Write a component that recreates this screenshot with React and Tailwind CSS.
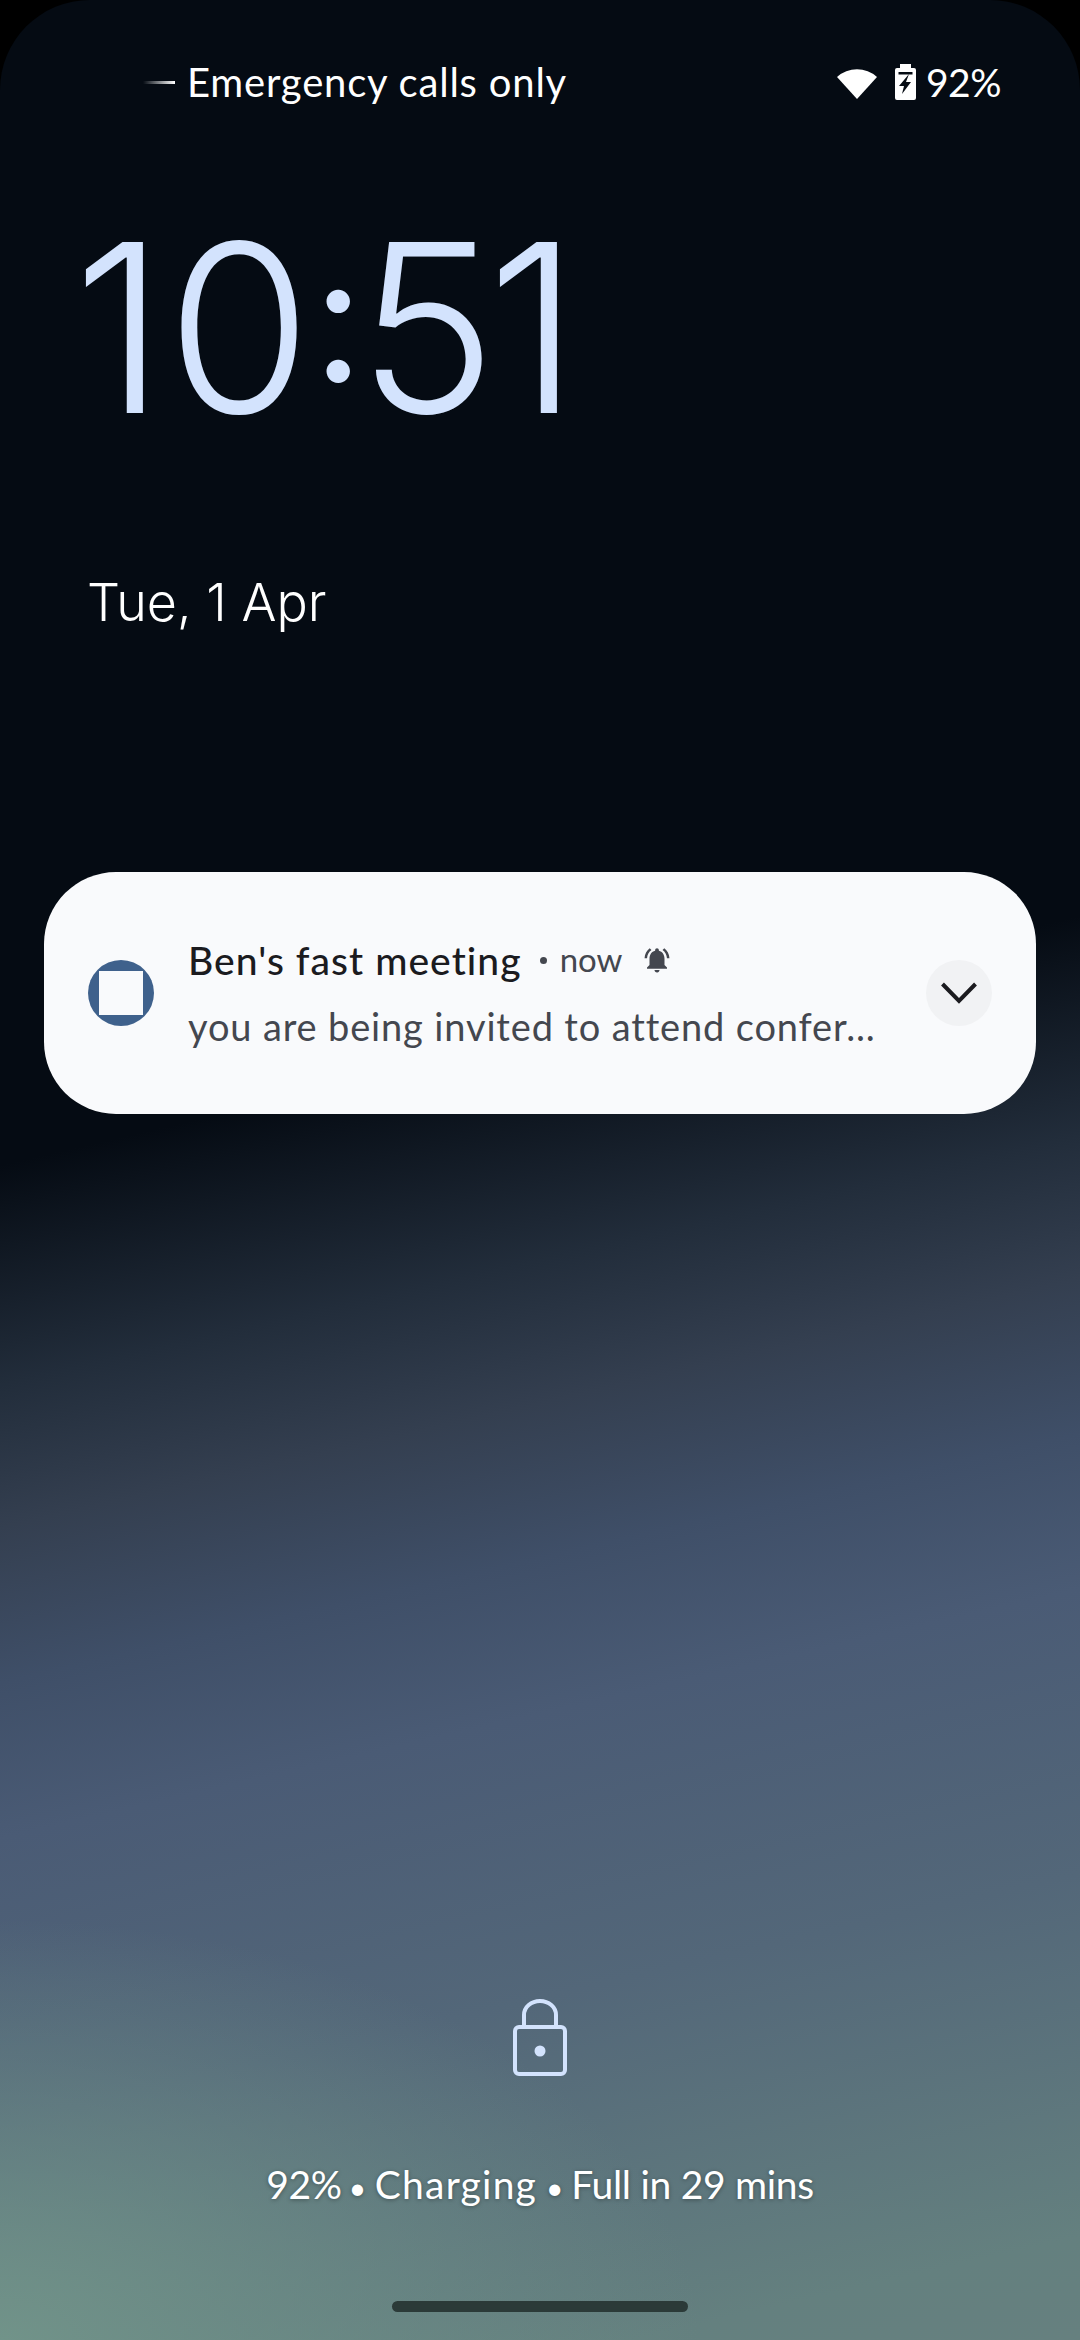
function WifiIcon() {
  return (
    <svg width="40" height="34" viewBox="0 0 40 34" fill="white">
      <path d="M20 34 L0 12 A30 30 0 0 1 40 12 Z" />
    </svg>
  );
}

function BatteryIcon() {
  return (
    <svg width="21" height="36" viewBox="0 0 21 36">
      <path fill="white" d="M5 0h11v4h3a2 2 0 0 1 2 2v28a2 2 0 0 1-2 2H2a2 2 0 0 1-2-2V6a2 2 0 0 1 2-2h3z" />
      <path fill="#050b13" d="M3.500 8h14v2.500h-14z" />
      <path fill="#050b13" d="M14 10 L4 22h5L7 30 16 18h-5z" />
    </svg>
  );
}

function BellIcon() {
  return (
    <svg width="30" height="30" viewBox="0 0 24 24" fill="#44474f">
      <path d="M7.58 4.080L6.150 2.650C3.750 4.480 2.170 7.300 2.030 10.500h2c.15-2.650 1.510-4.970 3.550-6.420zm12.390 6.420h2c-.15-3.200-1.730-6.020-4.120-7.850l-1.420 1.430c2.020 1.450 3.390 3.770 3.540 6.420zM18 11c0-3.070-1.640-5.640-4.500-6.320V4c0-.83-.67-1.500-1.500-1.500s-1.500.67-1.500 1.500v.68C7.630 5.360 6 7.920 6 11v5l-2 2v1h16v-1l-2-2v-5zm-6 11c.14 0 .27-.01.4-.04.65-.14 1.180-.58 1.440-1.180.1-.24.15-.5.15-.78h-4c.01 1.100.9 2 2.010 2z" />
    </svg>
  );
}

function LockIcon() {
  return (
    <svg width="54" height="77" viewBox="0 0 54 77" fill="none" stroke="#d3e3fd" strokeWidth="4">
      <path d="M11 28V16a16 14 0 0 1 32 0v12" />
      <rect x="2" y="28" width="50" height="47" rx="4" />
      <circle cx="27" cy="52" r="5.500" fill="#d3e3fd" stroke="none" />
    </svg>
  );
}

function App() {
  return (
    <div className="w-[1080px] h-[2340px] bg-black overflow-hidden font-['Lato',sans-serif]">
      <div className="w-full h-full flex flex-col rounded-t-[90px] bg-[radial-gradient(ellipse_700px_420px_at_0%_100%,#719389_0%,rgba(113,147,137,0)_100%),linear-gradient(167deg,#050b13_0%,#050b13_45%,#222d3b_53.5%,#343f50_59%,#3f4f68_65%,#4a5b75_71%,#536779_82%,#64807f_96%,#66807f_100%)]">
        <div className="flex items-center h-[40px] mt-[62px] pl-[143px] pr-[79px] text-white text-[40px] leading-[40px] tracking-[0.8px]">
          <div className="w-[32px] h-[3px] bg-gradient-to-r from-transparent to-white" />
          <span className="ml-[12px]">Emergency calls only</span>
          <div className="ml-auto flex items-center">
            <WifiIcon />
            <div className="ml-[18px] flex"><BatteryIcon /></div>
            <span className="ml-[10px] text-[39px] tracking-[-0.5px]">92%</span>
          </div>
        </div>

        <div className="mt-[108px] ml-[73px] h-[235px] text-[#d3e3fd] text-[235px] leading-[235px] font-light font-['Inter',sans-serif] tracking-[-3.5px]">
          <span className="tracking-[1px]">1</span>
          <span className="tracking-[1px]">0</span>
          <span className="text-[177px] font-normal leading-[0] align-[31px] tracking-[-6.5px]">:</span>
          <span className="tracking-[-9.5px]">5</span>
          1
        </div>

        <div className="mt-[128px] ml-[87px] h-[60px] text-white text-[52px] leading-[60px] font-light font-['Inter',sans-serif]">
          Tue, 1 Apr
        </div>

        <div className="mt-[239px] mx-[44px] h-[242px] rounded-[72px] bg-[#f9fafc] flex items-center pl-[44px] pr-[44px]">
          <div className="w-[66px] h-[66px] rounded-full bg-[#3f618c] flex items-center justify-center shrink-0">
            <div className="w-[44px] h-[44px] bg-[#f9fafc]" />
          </div>
          <div className="ml-[34px] flex-1 min-w-0">
            <div className="flex items-center h-[50px] text-[#44474f] text-[33px]">
              <span className="text-[#1b1b1f] text-[39px] font-medium tracking-[1.05px]">Ben's fast meeting</span>
              <div className="ml-[18px] w-[7px] h-[7px] rounded-full bg-[#44474f]" />
              <span className="ml-[13px]">now</span>
              <div className="ml-[20px] flex"><BellIcon /></div>
            </div>
            <div className="mt-[16px] h-[50px] leading-[50px] text-[#44474f] text-[38px] tracking-[0.85px]">
              you are being invited to attend confer...
            </div>
          </div>
          <div className="w-[66px] h-[66px] rounded-full bg-[#f1f2f4] flex items-center justify-center shrink-0">
            <svg width="36" height="22" viewBox="0 0 36 22" fill="none" stroke="#1b1b1f" strokeWidth="4">
              <path d="M1.500 2 L18 19 L34.500 2" />
            </svg>
          </div>
        </div>

        <div className="flex-1 flex flex-col items-center justify-end">
          <LockIcon />
          <div className="mt-[88px] h-[40px] flex items-baseline leading-[40px] text-white text-[39px] tracking-[-0.3px] [text-shadow:0_1px_4px_rgba(0,0,0,0.35)]">
            <span>92%</span>
            <span className="ml-[7px] text-[30px]">•</span>
            <span className="ml-[9px] tracking-[1.2px]">Charging</span>
            <span className="ml-[9px] text-[30px]">•</span>
            <span className="ml-[8px]">Full in 29 mins</span>
          </div>
          <div className="mt-[97px] mb-[28px] w-[296px] h-[11px] rounded-full bg-[#2b3a38]" />
        </div>
      </div>
    </div>
  );
}

export default App;
